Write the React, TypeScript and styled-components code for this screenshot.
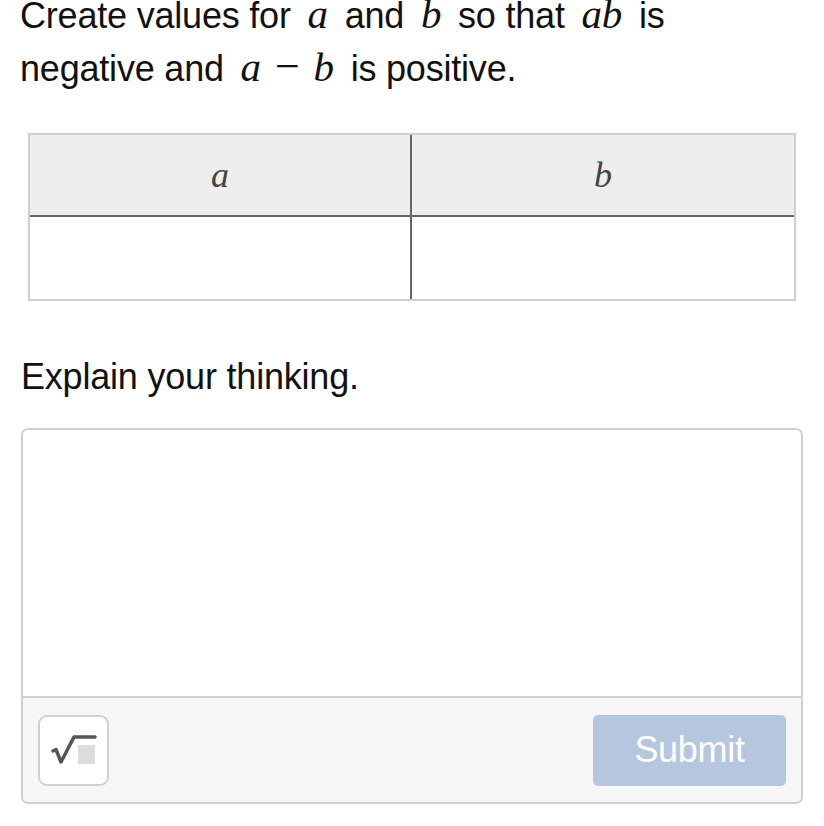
import React from "react";
import styled, { createGlobalStyle } from "styled-components";

const Global = createGlobalStyle`
  html, body { margin: 0; padding: 0; background: #fff; }
  body { font-family: "Liberation Sans", Arial, sans-serif; color: #111; overflow: hidden; }
`;

const Page = styled.div`
  width: 824px;
  height: 826px;
  padding: 0 21px 0 21px;
  box-sizing: border-box;
  display: flex;
  flex-direction: column;
`;

const Prompt = styled.p`
  margin: -11px 0 0 -1px;
  font-size: 36px;
  line-height: 53px;
  letter-spacing: -0.2px;
  white-space: nowrap;
`;

const M = styled.span`
  font-family: "Liberation Serif", "Times New Roman", serif;
  font-style: italic;
  font-size: 41px;
  line-height: 1;
  margin: 0 7px;
`;

const Op = styled.span`
  font-family: "Liberation Serif", "Times New Roman", serif;
  font-size: 44px;
  line-height: 1;
  margin: 0 7px;
`;

const Table = styled.div`
  margin: 38px 7px 0 7px;
  border: 2px solid #cfcfcf;
  display: grid;
  grid-template-columns: 1fr 1fr;
  grid-template-rows: 82px 82px;
`;

const Cell = styled.div<{ $head?: boolean; $right?: boolean }>`
  background: ${(p) => (p.$head ? "#eeeeee" : "#fff")};
  border-right: ${(p) => (p.$right ? "none" : "2px solid #666")};
  border-bottom: ${(p) => (p.$head ? "2px solid #666" : "none")};
  display: flex;
  align-items: center;
  justify-content: center;
  font-family: "Liberation Serif", "Times New Roman", serif;
  font-style: italic;
  font-size: 36px;
  color: #444;
`;

const Explain = styled.div`
  margin-top: 48px;
  font-size: 36px;
  line-height: 56px;
  letter-spacing: -0.2px;
`;

const Box = styled.div`
  margin-top: 23px;
  border: 2px solid #d0d0d0;
  border-radius: 7px;
  overflow: hidden;
  display: flex;
  flex-direction: column;
`;

const Area = styled.div`
  height: 266px;
  background: #fff;
  border-bottom: 2px solid #d0d0d0;
`;

const Footer = styled.div`
  background: #f6f6f6;
  height: 104px;
  padding: 0 15px;
  display: flex;
  align-items: center;
  justify-content: space-between;
`;

const MathBtn = styled.div`
  width: 67px;
  height: 67px;
  border: 2px solid #d0d0d0;
  border-radius: 9px;
  background: #fff;
  display: flex;
  align-items: center;
  justify-content: center;
`;

const Submit = styled.div`
  width: 193px;
  height: 71px;
  border-radius: 5px;
  background: #b4c7de;
  color: #fff;
  font-size: 36px;
  display: flex;
  align-items: center;
  justify-content: center;
  letter-spacing: -0.3px;
`;

const SqrtIcon = () => (
  <svg width="46" height="32" viewBox="0 0 46 32">
    <rect x="27" y="11" width="17" height="19" fill="#dcdcdc" />
    <path
      d="M2 17 L5 15.5 L10 28 L23 3 L44 3"
      fill="none"
      stroke="#555"
      strokeWidth="3.5"
      strokeLinejoin="round"
      strokeLinecap="round"
    />
  </svg>
);

export default function App() {
  return (
    <>
      <Global />
      <Page>
        <Prompt>
          Create values for <M>a</M> and <M>b</M> so that <M>ab</M> is
          <br />
          negative and <M>a</M>
          <Op>−</Op>
          <M>b</M> is positive.
        </Prompt>
        <Table>
          <Cell $head>a</Cell>
          <Cell $head $right>b</Cell>
          <Cell />
          <Cell $right />
        </Table>
        <Explain>Explain your thinking.</Explain>
        <Box>
          <Area />
          <Footer>
            <MathBtn>
              <SqrtIcon />
            </MathBtn>
            <Submit>Submit</Submit>
          </Footer>
        </Box>
      </Page>
    </>
  );
}
